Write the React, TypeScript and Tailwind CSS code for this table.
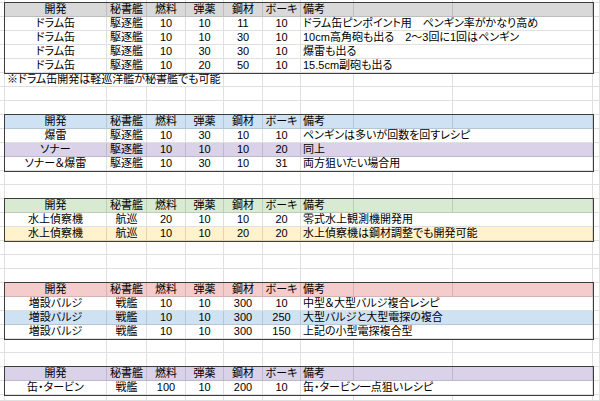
import type { ReactNode } from 'react'
import clsx from 'clsx'

// column widths, A (partial) .. K (partial)
const W = [
  'w-[5px]',
  'w-[102px]',
  'w-[40px]',
  'w-[39px]',
  'w-[38px]',
  'w-[39px]',
  'w-[38px]',
  'w-[53px]',
  'w-[99px]',
  'w-[140px]',
  'w-[7px]',
]

const HEAD = ['開発', '秘書艦', '燃料', '弾薬', '鋼材', 'ボーキ']

type Rec = { name: string; ship: string; v: string[]; note: string; bg?: string }

const T1: Rec[] = [
  { name: 'ドラム缶', ship: '駆逐艦', v: ['10', '10', '11', '10'], note: 'ドラム缶ピンポイント用　ペンギン率がかなり高め' },
  { name: 'ドラム缶', ship: '駆逐艦', v: ['10', '10', '30', '10'], note: '10cm高角砲も出る　2～3回に1回はペンギン' },
  { name: 'ドラム缶', ship: '駆逐艦', v: ['10', '30', '30', '10'], note: '爆雷も出る' },
  { name: 'ドラム缶', ship: '駆逐艦', v: ['10', '20', '50', '10'], note: '15.5cm副砲も出る' },
]

const T2: Rec[] = [
  { name: '爆雷', ship: '駆逐艦', v: ['10', '30', '10', '10'], note: 'ペンギンは多いが回数を回すレシピ' },
  { name: 'ソナー', ship: '駆逐艦', v: ['10', '10', '10', '20'], note: '同上', bg: 'bg-[#d9d2e9]' },
  { name: 'ソナー＆爆雷', ship: '駆逐艦', v: ['10', '30', '10', '31'], note: '両方狙いたい場合用' },
]

const T3: Rec[] = [
  { name: '水上偵察機', ship: '航巡', v: ['20', '10', '10', '20'], note: '零式水上観測機開発用' },
  { name: '水上偵察機', ship: '航巡', v: ['10', '10', '20', '20'], note: '水上偵察機は鋼材調整でも開発可能', bg: 'bg-[#fff2cc]' },
]

const T4: Rec[] = [
  { name: '増設バルジ', ship: '戦艦', v: ['10', '10', '300', '10'], note: '中型＆大型バルジ複合レシピ' },
  { name: '増設バルジ', ship: '戦艦', v: ['10', '10', '300', '250'], note: '大型バルジと大型電探の複合', bg: 'bg-[#cfe2f3]' },
  { name: '増設バルジ', ship: '戦艦', v: ['10', '10', '300', '150'], note: '上記の小型電探複合型' },
]

const T5: Rec[] = [
  { name: '缶・タービン', ship: '戦艦', v: ['100', '10', '200', '10'], note: '缶・タービン一点狙いレシピ' },
]

const grid = 'shrink-0 h-full border-r border-b border-black/[0.12] whitespace-nowrap'

function Cell({ col, children, left }: { col: number; children?: ReactNode; left?: boolean }) {
  return (
    <div className={clsx(grid, W[col], left ? 'pl-[2px] text-left' : 'text-center')}>
      {children}
    </div>
  )
}

function Blank({ h = 'h-[14px]' }: { h?: string }) {
  return (
    <div className={clsx('flex', h)}>
      {W.map((_, i) => (
        <Cell key={i} col={i} />
      ))}
    </div>
  )
}

function Table({ head, rows }: { head: string; rows: Rec[] }) {
  const n = rows.length + 1
  return (
    <div className="flex">
      <div className="flex flex-col">
        {Array.from({ length: n }).map((_, i) => (
          <div key={i} className="h-[14px]">
            <Cell col={0} />
          </div>
        ))}
      </div>
      <div className="relative z-10 flex flex-col outline outline-1 outline-[#3c3c3c]">
        <div className={clsx('flex h-[14px]', head)}>
          {HEAD.map((t, i) => (
            <Cell key={t} col={i + 1}>
              {t}
            </Cell>
          ))}
          <Cell col={7} left>
            備考
          </Cell>
          <Cell col={8} />
          <Cell col={9} />
        </div>
        {rows.map((r, k) => (
          <div key={k} className={clsx('flex h-[14px]', r.bg)}>
            <Cell col={1}>{r.name}</Cell>
            <Cell col={2}>{r.ship}</Cell>
            {r.v.map((x, i) => (
              <Cell key={i} col={i + 3}>
                {x}
              </Cell>
            ))}
            <div className={clsx(grid, 'w-[292px] pl-[2px]')}>{r.note}</div>
          </div>
        ))}
      </div>
      <div className="flex flex-col">
        {Array.from({ length: n }).map((_, i) => (
          <div key={i} className="h-[14px]">
            <Cell col={10} />
          </div>
        ))}
      </div>
    </div>
  )
}

export default function App() {
  return (
    <div
      className="w-[600px] h-[401px] overflow-hidden bg-white text-black text-[11px] leading-[13px] [font-feature-settings:'palt']"
      style={{ fontFamily: '"Liberation Sans", "Noto Sans CJK JP", sans-serif' }}
    >
      <Blank h="h-[3px]" />
      <Table head="bg-[#d9d9d9]" rows={T1} />
      {/* note row, text runs over B..E */}
      <div className="flex h-[14px]">
        <Cell col={0} />
        <div className={clsx(grid, 'w-[219px] pl-[2px]')}>※ドラム缶開発は軽巡洋艦が秘書艦でも可能</div>
        {[5, 6, 7, 8, 9, 10].map(i => (
          <Cell key={i} col={i} />
        ))}
      </div>
      <Blank />
      <Blank />
      <Table head="bg-[#cfe2f3]" rows={T2} />
      <Blank />
      <Blank />
      <Table head="bg-[#d9ead3]" rows={T3} />
      <Blank />
      <Blank />
      <Blank />
      <Table head="bg-[#f4cccc]" rows={T4} />
      <Blank />
      <Blank />
      <Table head="bg-[#d9d2e9]" rows={T5} />
      <Blank h="h-[6px]" />
    </div>
  )
}
